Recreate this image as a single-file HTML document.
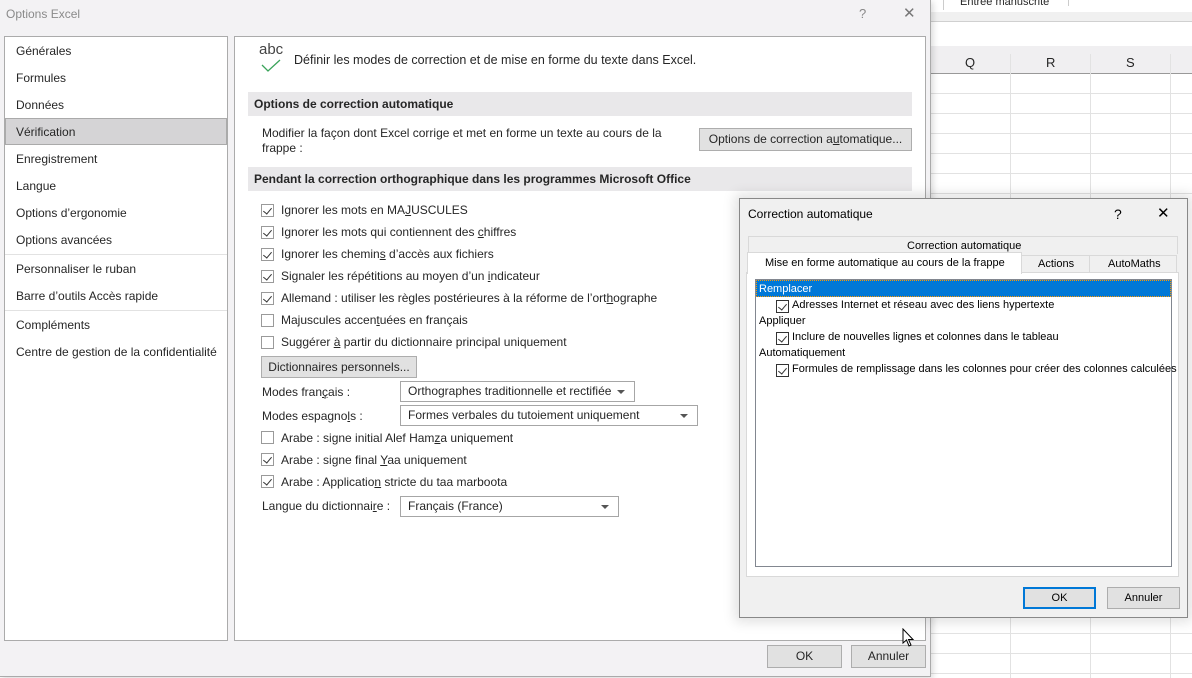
<!DOCTYPE html>
<html><head><meta charset="utf-8"><style>
*{margin:0;padding:0;box-sizing:border-box}
body{width:1192px;height:678px;overflow:hidden;background:#fff;font-family:"Liberation Sans",sans-serif;font-size:12px;color:#262626;position:relative}
.a{position:absolute;white-space:nowrap}
.cb{position:absolute;width:13px;height:13px;border:1px solid #9a9a9a;background:#fff}
.cb.on::after{content:"";position:absolute;left:3px;top:1px;width:4px;height:7px;border:solid #333;border-width:0 1.5px 1.5px 0;transform:rotate(40deg)}
.btn{position:absolute;background:#e1e1e1;border:1px solid #adadad;text-align:center}
.sel{position:absolute;background:#fff;border:1px solid #a6a6a6;padding-left:7px;line-height:19px}
.sel::after{content:"";position:absolute;right:9px;top:8px;border:4px solid transparent;border-top:4px solid #555}
.hl{position:absolute;background:#e9e8ea;font-weight:bold;padding-left:6px;line-height:24px}
.gl{position:absolute;background:#e2e2e2}
.d2{font-size:11px;color:#000}
</style></head><body>
<div class="a" style="left:930px;top:0;width:262px;height:678px;background:#fff"></div>
<div class="a" style="left:960px;top:-4px;font-size:11px">Entrée manuscrite</div>
<div class="gl" style="left:943px;top:0;width:1px;height:10px;background:#ccc"></div>
<div class="gl" style="left:1068px;top:0;width:1px;height:6px;background:#ccc"></div>
<div class="gl" style="left:930px;top:12px;width:262px;height:10px;background:#f0f0f0"></div>
<div class="gl" style="left:930px;top:21px;width:262px;height:1px;background:#d0d0d0"></div>
<div class="gl" style="left:930px;top:46px;width:262px;height:27px;background:#f0eff1"></div>
<div class="gl" style="left:930px;top:73px;width:262px;height:1px;background:#999"></div>
<div class="a" style="left:965px;top:55px;font-size:13px">Q</div>
<div class="a" style="left:1046px;top:55px;font-size:13px">R</div>
<div class="a" style="left:1126px;top:55px;font-size:13px">S</div>
<div class="gl" style="left:1010px;top:54px;width:1px;height:624px"></div>
<div class="gl" style="left:1090px;top:54px;width:1px;height:624px"></div>
<div class="gl" style="left:1170px;top:54px;width:1px;height:624px"></div>
<div class="gl" style="left:930px;top:93px;width:262px;height:1px"></div>
<div class="gl" style="left:930px;top:113px;width:262px;height:1px"></div>
<div class="gl" style="left:930px;top:133px;width:262px;height:1px"></div>
<div class="gl" style="left:930px;top:153px;width:262px;height:1px"></div>
<div class="gl" style="left:930px;top:173px;width:262px;height:1px"></div>
<div class="gl" style="left:930px;top:193px;width:262px;height:1px"></div>
<div class="gl" style="left:930px;top:633px;width:262px;height:1px"></div>
<div class="gl" style="left:930px;top:653px;width:262px;height:1px"></div>
<div class="gl" style="left:930px;top:673px;width:262px;height:1px"></div>

<div class="a" style="left:0;top:0;width:931px;height:677px;background:#f3f2f4;border-right:1px solid #aaa;border-bottom:1px solid #aaa;box-shadow:2px 2px 6px rgba(0,0,0,.15)"></div>
<div class="a" style="left:6px;top:7px;color:#8a8a8a;font-size:12px">Options Excel</div>
<div class="a" style="left:859px;top:6px;color:#888;font-size:13px">?</div>
<div class="a" style="left:903px;top:4px;color:#777;font-size:15px">✕</div>

<div class="a" style="left:4px;top:36px;width:224px;height:605px;background:#fff;border:1px solid #ababab"></div>
<div class="a" style="left:5px;top:118px;width:222px;height:27px;background:#d5d4d6;border:1px solid #aaa"></div>
<div class="a" style="left:16px;top:44px">Générales</div>
<div class="a" style="left:16px;top:71px">Formules</div>
<div class="a" style="left:16px;top:98px">Données</div>
<div class="a" style="left:16px;top:125px">Vérification</div>
<div class="a" style="left:16px;top:152px">Enregistrement</div>
<div class="a" style="left:16px;top:179px">Langue</div>
<div class="a" style="left:16px;top:206px">Options d’ergonomie</div>
<div class="a" style="left:16px;top:233px">Options avancées</div>
<div class="gl" style="left:5px;top:254px;width:222px;height:1px"></div>
<div class="a" style="left:16px;top:262px">Personnaliser le ruban</div>
<div class="a" style="left:16px;top:289px">Barre d’outils Accès rapide</div>
<div class="gl" style="left:5px;top:310px;width:222px;height:1px"></div>
<div class="a" style="left:16px;top:318px">Compléments</div>
<div class="a" style="left:16px;top:345px">Centre de gestion de la confidentialité</div>

<div class="a" style="left:234px;top:36px;width:692px;height:605px;background:#fff;border:1px solid #ababab"></div>
<div class="a" style="left:259px;top:41px;font-size:15px;color:#444">abc</div>
<svg class="a" style="left:261px;top:59px" width="20" height="14"><path d="M1 6 L7 12 L19 1" stroke="#3aa35a" stroke-width="1.3" fill="none"/></svg>
<div class="a" style="left:294px;top:53px;font-size:12.5px">Définir les modes de correction et de mise en forme du texte dans Excel.</div>
<div class="hl" style="left:248px;top:92px;width:664px">Options de correction automatique</div>
<div class="a" style="left:262px;top:126px">Modifier la façon dont Excel corrige et met en forme un texte au cours de la</div>
<div class="a" style="left:262px;top:141px">frappe :</div>
<div class="btn" style="left:699px;top:128px;width:213px;height:23px;line-height:21px">Options de correction a<u>u</u>tomatique...</div>
<div class="hl" style="left:248px;top:167px;width:664px">Pendant la correction orthographique dans les programmes Microsoft Office</div>

<div class="cb on" style="left:261px;top:204px"></div><div class="a" style="left:281px;top:203px">Ignorer les mots en MA<u>J</u>USCULES</div>
<div class="cb on" style="left:261px;top:226px"></div><div class="a" style="left:281px;top:225px">Ignorer les mots qui contiennent des <u>c</u>hiffres</div>
<div class="cb on" style="left:261px;top:248px"></div><div class="a" style="left:281px;top:247px">Ignorer les chemin<u>s</u> d’accès aux fichiers</div>
<div class="cb on" style="left:261px;top:270px"></div><div class="a" style="left:281px;top:269px">Signaler les répétitions au moyen d’un <u>i</u>ndicateur</div>
<div class="cb on" style="left:261px;top:292px"></div><div class="a" style="left:281px;top:291px">Allemand : utiliser les règles postérieures à la réforme de l’ort<u>h</u>ographe</div>
<div class="cb" style="left:261px;top:314px"></div><div class="a" style="left:281px;top:313px">Majuscules accen<u>t</u>uées en français</div>
<div class="cb" style="left:261px;top:336px"></div><div class="a" style="left:281px;top:335px">Suggérer <u>à</u> partir du dictionnaire principal uniquement</div>
<div class="btn" style="left:261px;top:356px;width:156px;height:22px;line-height:20px">Dictionnaires personnels...</div>
<div class="a" style="left:262px;top:385px">Modes fran<u>ç</u>ais :</div>
<div class="sel" style="left:400px;top:381px;width:235px;height:21px">Orthographes traditionnelle et rectifiée</div>
<div class="a" style="left:262px;top:409px">Modes espagno<u>l</u>s :</div>
<div class="sel" style="left:400px;top:405px;width:298px;height:21px">Formes verbales du tutoiement uniquement</div>
<div class="cb" style="left:261px;top:431px"></div><div class="a" style="left:281px;top:431px">Arabe : signe initial Alef Ham<u>z</u>a uniquement</div>
<div class="cb on" style="left:261px;top:453px"></div><div class="a" style="left:281px;top:453px">Arabe : signe final <u>Y</u>aa uniquement</div>
<div class="cb on" style="left:261px;top:475px"></div><div class="a" style="left:281px;top:475px">Arabe : Applicatio<u>n</u> stricte du taa marboota</div>
<div class="a" style="left:262px;top:499px">Langue du dictionnai<u>r</u>e :</div>
<div class="sel" style="left:400px;top:496px;width:219px;height:21px">Français (France)</div>
<div class="btn" style="left:767px;top:645px;width:75px;height:23px;line-height:21px">OK</div>
<div class="btn" style="left:851px;top:645px;width:75px;height:23px;line-height:21px">Annuler</div>

<div class="a d2" style="left:739px;top:198px;width:449px;height:420px;background:#f0f0f0;border:1px solid #888;box-shadow:0 0 12px 4px rgba(0,0,0,.12)"></div>
<div class="a d2" style="left:748px;top:207px;font-size:12px">Correction automatique</div>
<div class="a d2" style="left:1114px;top:206px;font-size:14px">?</div>
<div class="a d2" style="left:1157px;top:204px;font-size:15px">✕</div>
<div class="a" style="left:748px;top:236px;width:430px;height:18px;border:1px solid #d9d9d9;border-bottom:none"></div>
<div class="a d2" style="left:907px;top:240px">Correction automatique</div>
<div class="a" style="left:1021px;top:255px;width:69px;height:18px;border:1px solid #d9d9d9;background:#f0f0f0"></div>
<div class="a d2" style="left:1038px;top:258px">Actions</div>
<div class="a" style="left:1089px;top:255px;width:88px;height:18px;border:1px solid #d9d9d9;background:#f0f0f0"></div>
<div class="a d2" style="left:1108px;top:258px">AutoMaths</div>
<div class="a" style="left:746px;top:272px;width:433px;height:305px;background:#fff;border:1px solid #d9d9d9"></div>
<div class="a" style="left:747px;top:252px;width:275px;height:22px;background:#fff;border:1px solid #d9d9d9;border-bottom:none"></div>
<div class="a d2" style="left:765px;top:257px">Mise en forme automatique au cours de la frappe</div>
<div class="a" style="left:755px;top:279px;width:417px;height:288px;border:1px solid #828790;background:#fff"></div>
<div class="a" style="left:756px;top:280px;width:415px;height:17px;background:#0078d7;outline:1px dotted #f90;outline-offset:-1px"></div>
<div class="a d2" style="left:759px;top:283px;color:#fff">Remplacer</div>
<div class="cb on" style="left:776px;top:300px;border-color:#333"></div><div class="a d2" style="left:792px;top:299px">Adresses Internet et réseau avec des liens hypertexte</div>
<div class="a d2" style="left:759px;top:315px">Appliquer</div>
<div class="cb on" style="left:776px;top:332px;border-color:#333"></div><div class="a d2" style="left:792px;top:331px">Inclure de nouvelles lignes et colonnes dans le tableau</div>
<div class="a d2" style="left:759px;top:347px">Automatiquement</div>
<div class="cb on" style="left:776px;top:364px;border-color:#333"></div><div class="a d2" style="left:792px;top:363px">Formules de remplissage dans les colonnes pour créer des colonnes calculées</div>
<div class="btn d2" style="left:1023px;top:587px;width:73px;height:22px;line-height:18px;border:2px solid #0078d7">OK</div>
<div class="btn d2" style="left:1107px;top:587px;width:73px;height:22px;line-height:20px">Annuler</div>
<svg class="a" style="left:902px;top:628px" width="14" height="20"><path d="M1 1 L1 15 L4.5 12 L7 18 L9 17 L6.5 11.5 L11 11.5 Z" fill="#fff" stroke="#000" stroke-width="1"/></svg>
</body></html>
